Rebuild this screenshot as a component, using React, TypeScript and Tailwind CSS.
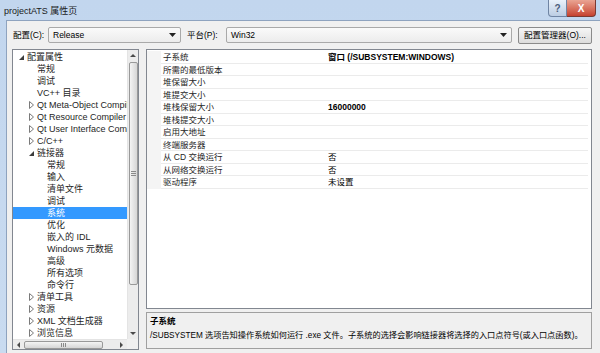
import React from "react";

type TreeItem = { t: string; l: number; s?: "open" | "closed"; sel?: boolean };

const tree: TreeItem[] = [
  { t: "配置属性", l: 0, s: "open" },
  { t: "常规", l: 1 },
  { t: "调试", l: 1 },
  { t: "VC++ 目录", l: 1 },
  { t: "Qt Meta-Object Compiler", l: 1, s: "closed" },
  { t: "Qt Resource Compiler", l: 1, s: "closed" },
  { t: "Qt User Interface Compiler", l: 1, s: "closed" },
  { t: "C/C++", l: 1, s: "closed" },
  { t: "链接器", l: 1, s: "open" },
  { t: "常规", l: 2 },
  { t: "输入", l: 2 },
  { t: "清单文件", l: 2 },
  { t: "调试", l: 2 },
  { t: "系统", l: 2, sel: true },
  { t: "优化", l: 2 },
  { t: "嵌入的 IDL", l: 2 },
  { t: "Windows 元数据", l: 2 },
  { t: "高级", l: 2 },
  { t: "所有选项", l: 2 },
  { t: "命令行", l: 2 },
  { t: "清单工具", l: 1, s: "closed" },
  { t: "资源", l: 1, s: "closed" },
  { t: "XML 文档生成器", l: 1, s: "closed" },
  { t: "浏览信息", l: 1, s: "closed" },
];

const props: { name: string; value: string; bold?: boolean }[] = [
  { name: "子系统", value: "窗口 (/SUBSYSTEM:WINDOWS)", bold: true },
  { name: "所需的最低版本", value: "" },
  { name: "堆保留大小", value: "" },
  { name: "堆提交大小", value: "" },
  { name: "堆栈保留大小", value: "16000000", bold: true },
  { name: "堆栈提交大小", value: "" },
  { name: "启用大地址", value: "" },
  { name: "终端服务器", value: "" },
  { name: "从 CD 交换运行", value: "否" },
  { name: "从网络交换运行", value: "否" },
  { name: "驱动程序", value: "未设置" },
];

const indent = ["pl-[4px]", "pl-[14px]", "pl-[24px]"];

const Arrow = ({ s }: { s?: "open" | "closed" }) => {
  if (s === "open")
    return (
      <svg width="7" height="7" viewBox="0 0 7 7">
        <polygon points="6,1 6,6 1,6" fill="#3c3c3c" />
      </svg>
    );
  if (s === "closed")
    return (
      <svg width="7" height="8" viewBox="0 0 7 8">
        <polygon points="1.5,0.5 5.5,4 1.5,7.5" fill="none" stroke="#7a7a7a" strokeWidth="1" />
      </svg>
    );
  return null;
};

const Caret = () => (
  <svg width="7" height="4" viewBox="0 0 7 4">
    <polygon points="0,0 7,0 3.5,4" fill="#222" />
  </svg>
);

const ScrollArrow = ({ dir }: { dir: "up" | "down" | "left" | "right" }) => {
  const pts = {
    up: "0,4 6,4 3,1",
    down: "0,1 6,1 3,4",
    left: "4,0 4,6 1,3",
    right: "1,0 1,6 4,3",
  }[dir];
  const w = dir === "up" || dir === "down" ? 6 : 5;
  const h = dir === "up" || dir === "down" ? 5 : 6;
  return (
    <svg width={w} height={h} viewBox={`0 0 ${w} ${h}`}>
      <polygon points={pts} fill="#4a4a4a" />
    </svg>
  );
};

export default function App() {
  return (
    <div
      className="w-[600px] h-[353px] overflow-hidden flex flex-col bg-gradient-to-b from-[#c2d6ee] to-[#c9dbf0] text-black"
      style={{ fontFamily: '"Liberation Sans", "Noto Sans CJK SC", sans-serif' }}
    >
      {/* title bar */}
      <div className="h-[20px] flex items-start justify-between shrink-0">
        <div className="pl-[4px] pt-[6px] text-[9px] leading-[11px] text-[#1a1a1a]">projectATS 属性页</div>
        <div className="flex mr-[4px]">
          <div className="w-[19px] h-[17px] rounded-bl-[4px] border border-[#6f84a3] border-t-0 bg-gradient-to-b from-[#e9f1fa] to-[#bccde3] flex items-center justify-center text-[10px] text-[#4a5d7b] font-bold">
            ?
          </div>
          <div className="w-[29px] h-[17px] rounded-br-[4px] border border-[#7a3a33] border-t-0 border-l-0 bg-gradient-to-b from-[#e9a493] to-[#c5402f] flex items-center justify-center text-[10px] text-white font-bold">
            X
          </div>
        </div>
      </div>

      {/* body */}
      <div className="flex-1 ml-[6px] bg-[#f0f0f0] border-l border-t border-[#8ea3bf] pl-[5px] pr-[8px] pt-[6px] flex flex-col text-[8.5px]">
        {/* toolbar */}
        <div className="h-[16px] flex items-center shrink-0">
          <div className="w-[36px] pl-[1px]">配置(C):</div>
          <div className="w-[133px] h-[16px] border border-[#a9a9a9] rounded-[2px] bg-gradient-to-b from-[#fafafa] to-[#ececec] flex items-center justify-between pl-[4px] pr-[4px]">
            <span>Release</span>
            <Caret />
          </div>
          <div className="w-[45px] pl-[6px]">平台(P):</div>
          <div className="w-[286px] h-[16px] border border-[#a9a9a9] rounded-[2px] bg-gradient-to-b from-[#fafafa] to-[#ececec] flex items-center justify-between pl-[4px] pr-[4px]">
            <span>Win32</span>
            <Caret />
          </div>
          <div className="ml-[6px] flex-1 h-[17px] border border-[#8a8a8a] rounded-[2px] bg-gradient-to-b from-[#f6f6f6] to-[#dcdcdc] flex items-center justify-center">
            配置管理器(O)...
          </div>
        </div>

        {/* content */}
        <div className="mt-[6px] flex gap-[7px]">
          {/* tree */}
          <div className="w-[127px] h-[301px] border border-[#828790] bg-white flex flex-col shrink-0">
            <div className="flex flex-1 min-h-0">
              <div className="flex-1 overflow-hidden pt-[1px] text-[9px]">
                {tree.map((it, i) => (
                  <div
                    key={i}
                    className={`h-[12px] flex items-center whitespace-nowrap ${indent[it.l]} ${it.sel ? "bg-[#3399ff] text-white" : "text-[#1e1e1e]"}`}
                  >
                    <span className="w-[10px] shrink-0 flex items-center pl-[1px]">
                      <Arrow s={it.s} />
                    </span>
                    <span className="leading-[12px]">{it.t}</span>
                  </div>
                ))}
              </div>
              {/* vertical scrollbar */}
              <div className="w-[11px] bg-[#ececec] border-l border-[#e4e4e4] flex flex-col items-center">
                <div className="h-[11px] flex items-center justify-center">
                  <ScrollArrow dir="up" />
                </div>
                <div className="w-[9px] h-[223px] mt-[1px] rounded-[2px] border border-[#999] bg-gradient-to-r from-[#f4f4f4] to-[#d6d6d6] flex flex-col items-center justify-center gap-[1px]">
                  <div className="w-[5px] h-px bg-[#8a8a8a]" />
                  <div className="w-[5px] h-px bg-[#8a8a8a]" />
                  <div className="w-[5px] h-px bg-[#8a8a8a]" />
                </div>
                <div className="flex-1" />
                <div className="h-[11px] flex items-center justify-center">
                  <ScrollArrow dir="down" />
                </div>
              </div>
            </div>
            {/* horizontal scrollbar */}
            <div className="h-[10px] flex shrink-0">
              <div className="flex-1 bg-[#ececec] border-t border-[#e4e4e4] flex items-center">
                <div className="w-[11px] flex justify-center">
                  <ScrollArrow dir="left" />
                </div>
                <div className="w-[79px] h-[8px] rounded-[2px] border border-[#999] bg-gradient-to-b from-[#f4f4f4] to-[#d6d6d6] flex items-center justify-center gap-[1px]">
                  <div className="w-px h-[4px] bg-[#8a8a8a]" />
                  <div className="w-px h-[4px] bg-[#8a8a8a]" />
                  <div className="w-px h-[4px] bg-[#8a8a8a]" />
                </div>
                <div className="flex-1" />
                <div className="w-[11px] flex justify-center">
                  <ScrollArrow dir="right" />
                </div>
              </div>
              <div className="w-[11px] bg-[#f0f0f0]" />
            </div>
          </div>

          {/* right side */}
          <div className="flex-1 flex flex-col">
            <div className="h-[260px] border border-[#828790] bg-white pt-px">
              {props.map((p, i) => (
                <div key={i} className="h-[12.5px] flex">
                  <div className="w-[14px] bg-[#f4f4f4] shrink-0" />
                  <div className="flex-1 flex border-b border-[#ebebeb] mr-[3px]">
                    <div className="w-[165px] pl-[2px] leading-[12px] text-[#1e1e1e] whitespace-nowrap">{p.name}</div>
                    <div className={`flex-1 pl-[2px] leading-[12px] whitespace-nowrap ${p.bold ? "font-bold" : ""}`}>{p.value}</div>
                  </div>
                </div>
              ))}
            </div>
            <div className="mt-[3px] h-[37px] border border-[#a0a0a0] bg-[#f0f0f0] px-[3px] pt-[2px] leading-[12px]">
              <div className="font-bold">子系统</div>
              <div className="mt-[3px] whitespace-nowrap text-[8.2px]">
                /SUBSYSTEM 选项告知操作系统如何运行 .exe 文件。子系统的选择会影响链接器将选择的入口点符号(或入口点函数)。
              </div>
            </div>
          </div>
        </div>
      </div>
    </div>
  );
}
